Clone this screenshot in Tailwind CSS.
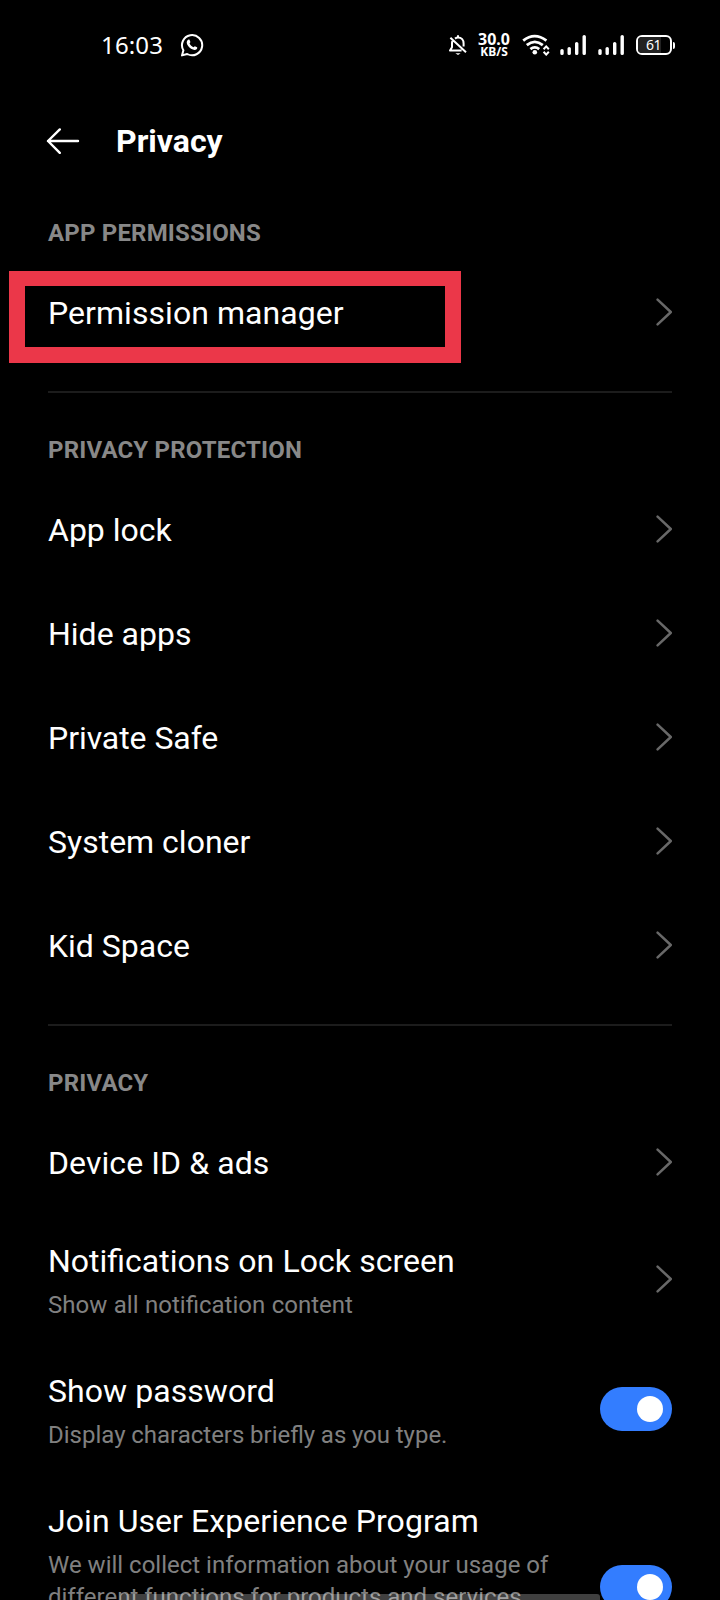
<!DOCTYPE html>
<html lang="en">
<head>
<meta charset="utf-8">
<title>Privacy</title>
<script src="https://cdn.jsdelivr.net/npm/@tailwindcss/browser@4"></script>
</head>
<body class="bg-black">
<svg class="hidden">
  <symbol id="chevron" viewBox="0 0 16 28"><path d="M1.6 1.7 L14.8 14 L1.6 26.3" fill="none" stroke="#686868" stroke-width="2.5" stroke-linecap="round" stroke-linejoin="round"/></symbol>
  <symbol id="signal" viewBox="0 0 28 22"><path d="M2 16.6V19.4M9.2 14.6V19.4M16.7 9.6V19.4M24.2 2.6V19.4" fill="none" stroke="#fff" stroke-width="3.4" stroke-linecap="round"/></symbol>
</svg>
<div class="relative flex h-[1600px] w-[720px] flex-col overflow-hidden bg-black font-['Roboto',sans-serif] text-white">
  <header class="flex h-[90px] shrink-0 items-center pl-[101px]">
    <span class="w-[79px] font-['Noto_Sans',sans-serif] text-[24px] leading-[30px] tracking-[0.15px]">16:03</span>
    <svg class="h-6 w-6" viewBox="0 0 24 24" fill="none" stroke="#fff" stroke-width="2" stroke-linejoin="round"><path d="M2 22.4 L3.4 17.3 A10.1 10.1 0 1 1 7.2 21 Z"/><path d="M8.6 6.6C9 6.5 9.4 6.6 9.6 7.1L10.4 9C10.5 9.4 9.6 10.2 9.6 10.5C10.4 12.2 11.8 13.5 13.4 14.2C13.8 14.3 14.5 13.1 14.9 13.2L17 14.2C17.5 14.5 17.2 15.7 16.6 16.3C15.6 17.1 14.3 17.2 12.9 16.6C10.2 15.6 8.3 13.5 7.1 11.2C6.3 9.4 6.8 7.3 8.6 6.6Z" fill="#fff" stroke="none"/></svg>
    <svg class="ml-[244px] h-[22px] w-5" viewBox="0 0 20 22" fill="none" stroke="#fff" stroke-width="2" stroke-linejoin="round"><path d="M7 4.6C8 3.8 9 3.4 10 3.4C13.6 3.4 15.6 6 15.6 9.4V12.4M4.4 7.2C4.1 8 4 8.7 4 9.6V13.2L2 16.6H13.6M10 1.2V3M2.4 3.8L18 18.2"/><path d="M7.4 19.2H12.6L10 21Z" fill="#fff" stroke="none"/></svg>
    <div class="ml-[10px] flex h-7 w-8 flex-col items-center justify-center font-['Noto_Sans',sans-serif] font-bold whitespace-nowrap">
      <span class="text-[16px] leading-[13px]">30.0</span>
      <span class="text-[12px] leading-[12px]">KB/S</span>
    </div>
    <svg class="ml-3 h-[22px] w-7" viewBox="0 0 28 22" fill="none" stroke="#fff" stroke-width="2.8"><path d="M1.2 6.6Q12.6 -2.4 24.4 6.6M4.8 11.2Q12.8 4.6 20.8 11.2M8.4 15.2Q12.8 11.6 17.2 15.2"/><circle cx="12.8" cy="18.3" r="2.3" fill="#fff" stroke="none"/><path d="M21.6 15.2L24.2 12.4L26.8 15.2M21.6 17.8L24.2 20.6L26.8 17.8" stroke-width="2"/></svg>
    <svg class="ml-[10px] h-[22px] w-7"><use href="#signal"/></svg>
    <svg class="ml-[10px] h-[22px] w-7"><use href="#signal"/></svg>
    <div class="ml-[10px] flex items-center">
      <div class="flex h-5 w-9 items-center rounded-[6px] border-2 border-white bg-black"><span class="flex h-full w-[23px] items-center justify-end rounded-l-[4px] bg-[#222] font-['Noto_Sans',sans-serif] text-[14px] leading-none tracking-[-0.5px]">61</span></div>
      <div class="ml-px h-[7px] w-[2px] rounded-r-sm bg-white"></div>
    </div>
  </header>

  <div class="flex h-[102px] shrink-0 items-center pl-[46px]">
    <svg class="h-[26px] w-[34px]" viewBox="0 0 34 26" fill="none" stroke="#fff" stroke-width="2.4" stroke-linecap="round" stroke-linejoin="round"><path d="M13.8 1.4L2 13L13.8 24.8M2 13H32"/></svg>
    <h1 class="ml-9 text-[32px] leading-[38px] font-bold">Privacy</h1>
  </div>

  <main class="flex flex-col px-12">
    <h2 class="flex h-[68px] items-end pb-[13px] text-[24px] leading-[28px] font-bold tracking-[0.18px] text-[#888]">APP PERMISSIONS</h2>
    <div class="relative flex h-[104px] items-center justify-between">
      <div class="absolute top-[11px] -left-[39px] h-[92px] w-[452px] border-x-[16px] border-t-[15px] border-b-[16px] border-[#eb3749]"></div>
      <span class="relative pt-0.5 text-[32px] leading-[38px] tracking-[0.06px]">Permission manager</span>
      <svg class="h-7 w-4"><use href="#chevron"/></svg>
    </div>
    <hr class="mt-[27px] border-t-2 border-[#1c1c1c]">
    <h2 class="flex h-[84px] items-end pb-[13px] text-[24px] leading-[28px] font-bold tracking-[0.18px] text-[#888]">PRIVACY PROTECTION</h2>
    <div class="flex h-[104px] items-center justify-between"><span class="pt-0.5 text-[32px] leading-[38px]">App lock</span><svg class="h-7 w-4"><use href="#chevron"/></svg></div>
    <div class="flex h-[104px] items-center justify-between"><span class="pt-0.5 text-[32px] leading-[38px]">Hide apps</span><svg class="h-7 w-4"><use href="#chevron"/></svg></div>
    <div class="flex h-[104px] items-center justify-between"><span class="pt-0.5 text-[32px] leading-[38px] tracking-[-0.06px]">Private Safe</span><svg class="h-7 w-4"><use href="#chevron"/></svg></div>
    <div class="flex h-[104px] items-center justify-between"><span class="pt-0.5 text-[32px] leading-[38px]">System cloner</span><svg class="h-7 w-4"><use href="#chevron"/></svg></div>
    <div class="flex h-[104px] items-center justify-between"><span class="pt-0.5 text-[32px] leading-[38px]">Kid Space</span><svg class="h-7 w-4"><use href="#chevron"/></svg></div>
    <hr class="mt-[27px] border-t-2 border-[#1c1c1c]">
    <h2 class="flex h-[84px] items-end pb-[13px] text-[24px] leading-[28px] font-bold tracking-[0.18px] text-[#888]">PRIVACY</h2>
    <div class="flex h-[104px] items-center justify-between"><span class="pt-0.5 text-[32px] leading-[38px] tracking-[0.08px]">Device ID &amp; ads</span><svg class="h-7 w-4"><use href="#chevron"/></svg></div>
    <div class="flex h-[130px] items-center justify-between">
      <div class="flex h-full flex-col gap-[9px] pt-7"><span class="text-[32px] leading-[38px] [word-spacing:0.4px]">Notifications on Lock screen</span><span class="text-[24px] leading-8 [word-spacing:0.6px] text-[#808080]">Show all notification content</span></div>
      <svg class="h-7 w-4"><use href="#chevron"/></svg>
    </div>
    <div class="flex h-[130px] items-center justify-between">
      <div class="flex h-full flex-col gap-[9px] pt-7"><span class="text-[32px] leading-[38px] tracking-[0.06px]">Show password</span><span class="text-[24px] leading-8 [word-spacing:-0.3px] text-[#808080]">Display characters briefly as you type.</span></div>
      <div class="flex h-11 w-[72px] items-center justify-end rounded-full bg-[#337dff] pr-[9px]"><div class="size-[26px] rounded-full bg-white"></div></div>
    </div>
    <div class="flex h-[226px] items-center justify-between">
      <div class="flex h-full flex-col gap-[9px] pt-7"><span class="text-[32px] leading-[38px] tracking-[0.07px]">Join User Experience Program</span><span class="w-[520px] text-[24px] leading-8 text-[#808080]">We will collect information about your usage of different functions for products and services</span></div>
      <div class="flex h-11 w-[72px] items-center justify-end rounded-full bg-[#337dff] pr-[9px]"><div class="size-[26px] rounded-full bg-white"></div></div>
    </div>
  </main>
  <div class="absolute bottom-0 left-[120px] h-[6px] w-[480px] rounded-t-[3px] bg-white/25"></div>
</div>
</body>
</html>
